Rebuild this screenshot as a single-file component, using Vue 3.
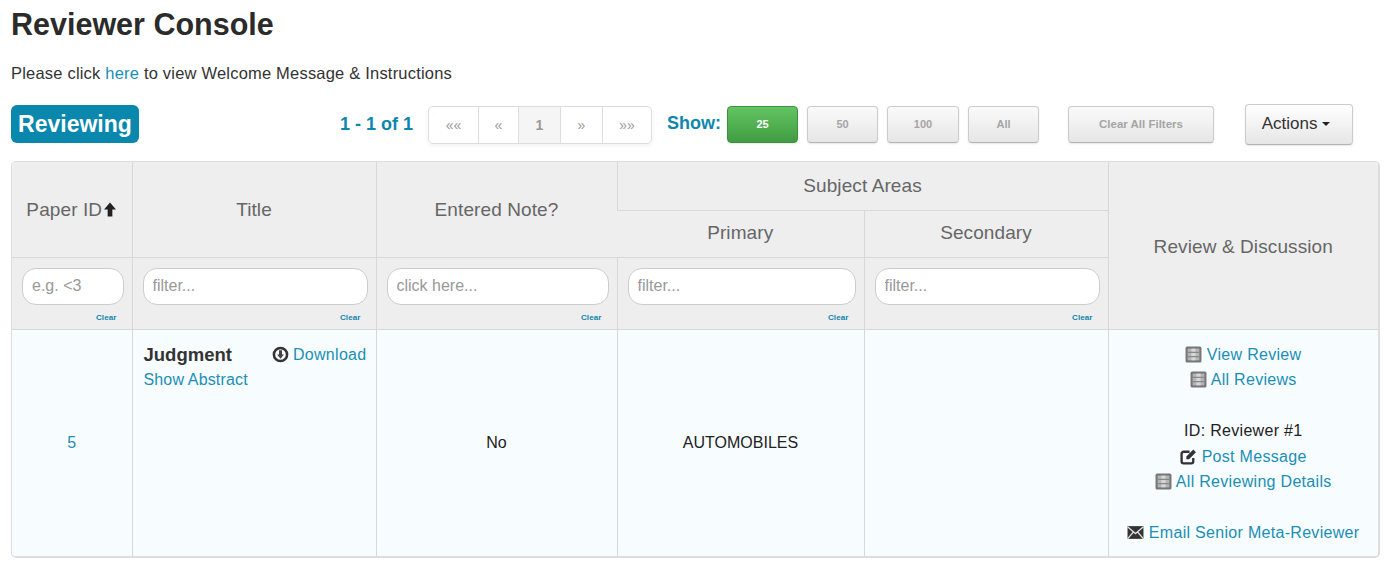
<script setup>
const pages = ['««', '«', '1', '»', '»»']
const sizes = ['25', '50', '100', 'All']
const filters = [
  { ph: 'e.g. <3' },
  { ph: 'filter...' },
  { ph: 'click here...' },
  { ph: 'filter...' },
  { ph: 'filter...' }
]
</script>

<template>
  <div class="page">
    <h1 class="title">Reviewer Console</h1>
    <p class="intro">Please click <a class="link">here</a> to view Welcome Message &amp; Instructions</p>

    <div class="toolbar">
      <span class="badge">Reviewing</span>
      <span class="count">1 - 1 of 1</span>
      <div class="pager">
        <span v-for="p in pages" :key="p" class="pg" :class="{ cur: p === '1', end: p.length === 2 && p !== '1' }">{{ p }}</span>
      </div>
      <span class="show">Show:</span>
      <div class="sizes">
        <span v-for="s in sizes" :key="s" class="btn" :class="{ on: s === '25', wide: s === '100' }">{{ s }}</span>
      </div>
      <span class="btn clear">Clear All Filters</span>
      <span class="actions">Actions <i class="caret"></i></span>
    </div>

    <div class="tablewrap">
      <table class="grid">
        <colgroup>
          <col class="c1" /><col class="c2" /><col class="c3" /><col class="c4" /><col class="c5" /><col class="c6" />
        </colgroup>
        <thead>
          <tr class="r1">
            <th rowspan="2" class="nudge">Paper ID<svg class="sort" viewBox="0 0 12 14"><path d="M6 0.5 L11.6 7 H8.2 V13.5 H3.8 V7 H0.4 Z" fill="#222" /></svg></th>
            <th rowspan="2" class="nudge">Title</th>
            <th rowspan="2" class="nudge">Entered Note?</th>
            <th colspan="2">Subject Areas</th>
            <th rowspan="3" class="last">Review &amp; Discussion</th>
          </tr>
          <tr class="r2">
            <th class="sub">Primary</th>
            <th class="sub">Secondary</th>
          </tr>
          <tr class="r3">
            <th v-for="(f, i) in filters" :key="i" class="filter">
              <input class="inp" :placeholder="f.ph" />
              <span class="clr">Clear</span>
            </th>
          </tr>
        </thead>
        <tbody>
          <tr class="r4">
            <td class="mid"><a class="link">5</a></td>
            <td class="top">
              <div class="titlerow">
                <strong class="paper">Judgment</strong>
                <span class="dl">
                  <svg class="ic" viewBox="0 0 16 16"><circle cx="8" cy="8" r="6.2" fill="none" stroke="#333" stroke-width="2.4" /><path d="M6.6 4 H9.4 V8 H11.2 L8 12 L4.8 8 H6.6 Z" fill="#444" /></svg>
                  <a class="link">Download</a>
                </span>
              </div>
              <a class="link abs">Show Abstract</a>
            </td>
            <td class="mid plain">No</td>
            <td class="mid plain">AUTOMOBILES</td>
            <td></td>
            <td class="review last">
              <div class="ln"><svg class="ic" viewBox="0 0 16 16"><rect x="0.5" y="0.5" width="15" height="15" rx="1.5" fill="#777" /><path d="M2.5 2.5 H13.5 V13.5 H2.5 Z" fill="#b5b5b5" /><path d="M6 2.5 H10 V13.5 H6 Z" fill="#d6d6d6" /><path d="M2.5 6 H13.5 M2.5 10 H13.5" stroke="#888" stroke-width="1" /></svg> <a class="link">View Review</a></div>
              <div class="ln"><svg class="ic" viewBox="0 0 16 16"><rect x="0.5" y="0.5" width="15" height="15" rx="1.5" fill="#777" /><path d="M2.5 2.5 H13.5 V13.5 H2.5 Z" fill="#b5b5b5" /><path d="M6 2.5 H10 V13.5 H6 Z" fill="#d6d6d6" /><path d="M2.5 6 H13.5 M2.5 10 H13.5" stroke="#888" stroke-width="1" /></svg> <a class="link">All Reviews</a></div>
              <div class="ln gap">ID: Reviewer #1</div>
              <div class="ln"><svg class="ic" viewBox="0 0 16 16"><path d="M12.5 9.5 V12.5 A2 2 0 0 1 10.5 14.5 H3.5 A2 2 0 0 1 1.5 12.5 V5.5 A2 2 0 0 1 3.5 3.5 H9" fill="none" stroke="#333" stroke-width="2.2" /><path d="M6 8 L12.5 1.5 L15 4 L8.5 10.5 H6 Z" fill="#333" /></svg> <a class="link">Post Message</a></div>
              <div class="ln"><svg class="ic" viewBox="0 0 16 16"><rect x="0.5" y="0.5" width="15" height="15" rx="1.5" fill="#777" /><path d="M2.5 2.5 H13.5 V13.5 H2.5 Z" fill="#b5b5b5" /><path d="M6 2.5 H10 V13.5 H6 Z" fill="#d6d6d6" /><path d="M2.5 6 H13.5 M2.5 10 H13.5" stroke="#888" stroke-width="1" /></svg> <a class="link">All Reviewing Details</a></div>
              <div class="ln gap"><svg class="ic" viewBox="0 0 16 16"><path d="M0.5 2 H15.5 V14 H0.5 Z" fill="#333" /><path d="M0.5 2.5 L8 9 L15.5 2.5 M0.5 14 L6 7.5 M15.5 14 L10 7.5" fill="none" stroke="#ddd" stroke-width="1.2" /></svg> <a class="link">Email Senior Meta-Reviewer</a></div>
            </td>
          </tr>
        </tbody>
      </table>
    </div>
  </div>
</template>

<style scoped>
.page {
  width: 1397px;
  height: 568px;
  box-sizing: border-box;
  padding: 6px 18px 0 11px;
  font-family: "Liberation Sans", Arial, sans-serif;
  color: #333;
  overflow: hidden;
}
.title {
  margin: 0;
  font-size: 30.5px;
  line-height: 36px;
  font-weight: 700;
  color: #2b2b2b;
}
.intro {
  margin: 20px 0 0;
  font-size: 16.5px;
  letter-spacing: 0.2px;
  line-height: 22px;
  color: #333;
}
.link { color: #1b8fb5; }
.toolbar {
  display: flex;
  align-items: center;
  margin-top: 20px;
  height: 40px;
}
.badge {
  background: #0a87ad;
  color: #fff;
  font-weight: 700;
  font-size: 23px;
  line-height: 38px;
  width: 128px;
  text-align: center;
  border-radius: 6px;
}
.count {
  margin-left: 201px;
  width: 88px;
  color: #0f86ad;
  font-weight: 700;
  font-size: 18px;
  white-space: nowrap;
}
.pager {
  display: flex;
  height: 36px;
  margin-top: 2px;
  border: 1px solid #ddd;
  border-radius: 5px;
  box-shadow: 0 2px 4px rgba(0, 0, 0, 0.05);
  overflow: hidden;
}
.pg {
  width: 42px;
  line-height: 36px;
  text-align: center;
  font-size: 14px;
  color: #999;
  border-left: 1px solid #ddd;
  box-sizing: border-box;
}
.pg.end { width: 49px; }
.pg:first-child { border-left: 0; }
.pg:nth-child(2) { width: 40px; }
.pg.cur { background: #f5f5f5; font-weight: 700; }
.show {
  margin-left: 15px;
  color: #0f86ad;
  font-weight: 700;
  font-size: 18px;
  width: 60px;
  margin-top: -2px;
}
.sizes { display: flex; gap: 9px; margin-top: 1px; }
.btn {
  box-sizing: border-box;
  width: 71px;
  height: 37px;
  line-height: 35px;
  text-align: center;
  font-size: 11px;
  font-weight: 700;
  color: #a5a5a5;
  background: linear-gradient(#fafafa, #e6e6e6);
  border: 1px solid #ccc;
  border-bottom-color: #b3b3b3;
  border-radius: 4px;
  box-shadow: 0 1px 2px rgba(0, 0, 0, 0.1);
}
.btn.on {
  color: #fff;
  background: linear-gradient(#62c462, #429c42);
  border-color: #3f8f3f;
}
.btn.wide { width: 72px; }
.clear {
  margin-left: 29px;
  margin-top: 1px;
  width: 146px;
  font-size: 11.5px;
}
.actions {
  box-sizing: border-box;
  margin-left: 31px;
  padding-right: 6px;
  width: 108px;
  height: 41px;
  line-height: 37px;
  text-align: center;
  font-size: 17px;
  color: #333;
  background: linear-gradient(#fff, #e6e6e6);
  border: 1px solid #ccc;
  border-bottom-color: #b3b3b3;
  border-radius: 4px;
  box-shadow: 0 1px 2px rgba(0, 0, 0, 0.1);
}
.caret {
  display: inline-block;
  vertical-align: middle;
  border-top: 4px solid #222;
  border-left: 4px solid transparent;
  border-right: 4px solid transparent;
}
.tablewrap {
  margin-top: 17px;
  width: 1369px;
  box-sizing: border-box;
  border: 1px solid #ddd;
  border-width: 1px 2px 2px 1px;
  border-radius: 5px;
  overflow: hidden;
}
.grid {
  width: 100%;
  table-layout: fixed;
  border-collapse: collapse;
}
.c1 { width: 120px; }
.c2 { width: 244px; }
.c3 { width: 241px; }
.c4 { width: 247px; }
.c5 { width: 244px; }
.grid th, .grid td {
  border-left: 1px solid #d8d8d8;
  border-top: 1px solid #d8d8d8;
  padding: 0;
  text-align: center;
  vertical-align: middle;
}
.grid th:first-child, .grid td:first-child { border-left: 0; }
.grid tr.r1 th { border-top: 0; }
.grid th {
  background: #eee;
  font-weight: 400;
  font-size: 19px;
  letter-spacing: 0.1px;
  color: #666;
}
.grid th.last { padding-top: 4px; }
.grid th.nudge { padding-top: 1px; }
.grid th.sub { padding-bottom: 2px; }
.r1 { height: 48px; }
.r2 { height: 47px; }
.r3 { height: 72px; }
.r4 { height: 227px; }
.sort { width: 14px; height: 15px; margin-left: 1px; vertical-align: -1px; }
.filter { position: relative; text-align: left; }
.inp {
  display: block;
  box-sizing: border-box;
  width: calc(100% - 18px);
  height: 37px;
  margin: 0 8px 14px 10px;
  padding: 0 9px;
  border: 1.5px solid #ccc;
  border-radius: 14px;
  background: #fff;
  font: 16px "Liberation Sans", Arial, sans-serif;
  outline: none;
}
.inp::placeholder { color: #999; }
.clr {
  position: absolute;
  right: 15px;
  bottom: 7px;
  font-size: 8px;
  line-height: 8px;
  font-weight: 700;
  color: #0f86ad;
}
.grid td {
  background: #f7fcff;
  font-size: 16px;
  letter-spacing: 0.3px;
  color: #222;
}
.grid td.plain { letter-spacing: 0; }
.top { vertical-align: top !important; text-align: left !important; padding: 14px 9px 0 11px !important; }
.titlerow { display: flex; justify-content: space-between; align-items: center; }
.paper { font-size: 18.5px; color: #333; letter-spacing: 0; }
.dl { display: flex; align-items: center; gap: 4px; }
.abs { display: block; margin-top: 5px; letter-spacing: 0.15px; }
.ic { width: 17px; height: 17px; vertical-align: -3px; }
.review { vertical-align: top !important; padding-top: 12px !important; }
.ln { line-height: 25.5px; }
.gap { margin-top: 25.5px; }
</style>

<style>
html, body { margin: 0; background: #fff; }
</style>
